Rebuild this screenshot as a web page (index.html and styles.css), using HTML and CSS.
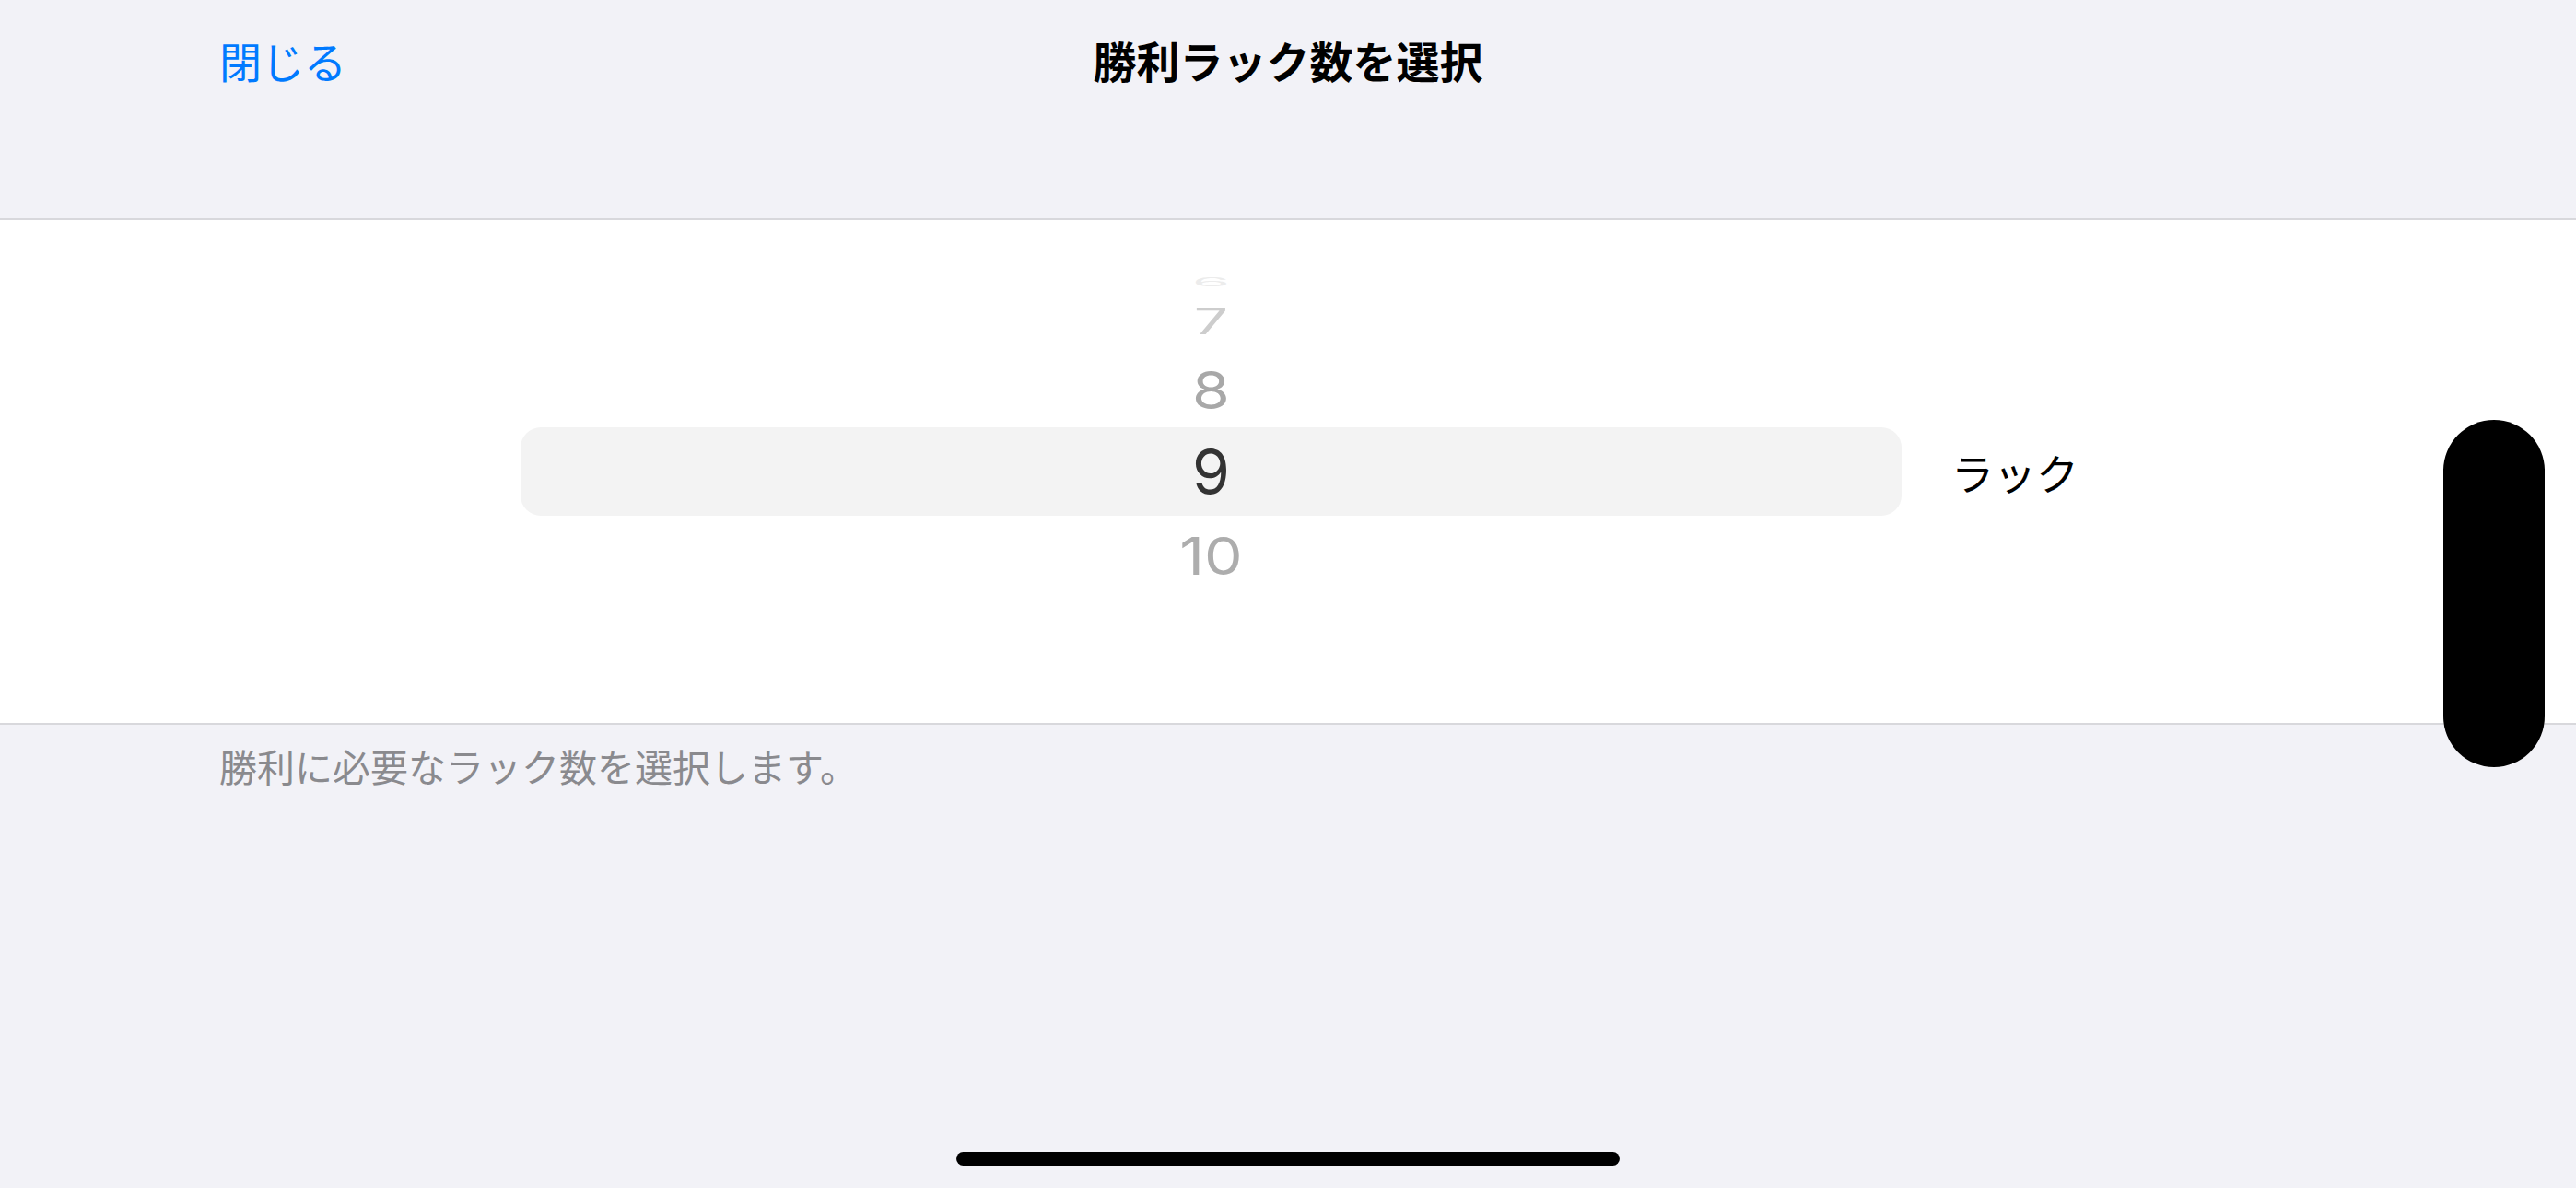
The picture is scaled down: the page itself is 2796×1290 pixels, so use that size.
FILE: index.html
```html
<!doctype html>
<html lang="ja">

<head>
  <meta charset="UTF-8" />
  <title>勝利ラック数を選択</title>
  <link rel="stylesheet" href="styles.css">
</head>

<body>
  <header class="nav">
    <a class="nav-close">閉じる</a>
    <h1 class="nav-title">勝利ラック数を選択</h1>
    <span></span>
  </header>

  <section class="picker">
    <div class="wheel">
      <div class="row row-6"><span>6</span></div>
      <div class="row row-7"><span>7</span></div>
      <div class="row row-8"><span>8</span></div>
      <div class="row row-9 selected"><span>9</span></div>
      <div class="row row-10"><span>10</span></div>
    </div>
    <div class="unit">ラック</div>
  </section>

  <p class="footer-note">勝利に必要なラック数を選択します。</p>

  <div class="side-pill"></div>
  <div class="home-bar"></div>
</body>

</html>
```

FILE: styles.css
```css
body {
  font-family: "Noto Sans CJK JP", "Noto Sans", sans-serif;
  background: #f2f2f7;
  color: #000;
  margin: 0;
  width: 2796px;
  height: 1290px;
  overflow: hidden;
  position: relative;
}

.nav {
  display: grid;
  grid-template-columns: 1fr auto 1fr;
  align-items: start;
  height: 237px;
  box-sizing: border-box;
  padding: 36px 238px 0;
}

.nav-close {
  color: #007aff;
  font-size: 46px;
  line-height: 58px;
}

.nav-title {
  margin: 0;
  font-size: 47px;
  line-height: 58px;
  font-weight: bold;
}

.picker {
  background: #fff;
  border-top: 2px solid #d8d8dc;
  border-bottom: 2px solid #d8d8dc;
  height: 550px;
  box-sizing: border-box;
  display: flex;
  align-items: center;
  padding-left: 565px;
}

.wheel {
  width: 1499px;
  display: flex;
  flex-direction: column;
  padding-bottom: 82px;
  font-family: Inter, Roboto, sans-serif;
}

.row {
  display: flex;
  justify-content: center;
  align-items: center;
  font-size: 66px;
  overflow: hidden;
}

.row span {
  display: block;
  line-height: 1;
}

.row-6 {
  height: 20px;
  color: #ececec;
}

.row-6 span {
  transform: scaleY(0.2);
}

.row-7 {
  height: 66px;
  color: #cdcdcd;
}

.row-7 span {
  transform: scaleY(0.6);
}

.row-8 {
  height: 82px;
  color: #a8a8a8;
}

.row-8 span {
  transform: scaleY(0.86);
}

.row-9 {
  height: 96px;
  color: #333;
}

.row-10 {
  height: 86px;
  color: #adadad;
}

.row-10 span {
  transform: scaleY(0.86);
}

.selected {
  background: #f3f3f3;
  border-radius: 22px;
}

.unit {
  margin-left: 54px;
  font-size: 46px;
  line-height: 58px;
}

.footer-note {
  margin: 0;
  padding: 19px 238px 0;
  font-size: 41px;
  line-height: 50px;
  color: #8a8a8e;
}

/* overlays */
.side-pill {
  position: absolute;
  left: 2652px;
  top: 456px;
  width: 110px;
  height: 377px;
  border-radius: 55px;
  background: #000;
}

.home-bar {
  position: absolute;
  left: 1038px;
  top: 1251px;
  width: 720px;
  height: 15px;
  border-radius: 8px;
  background: #000;
}
```
